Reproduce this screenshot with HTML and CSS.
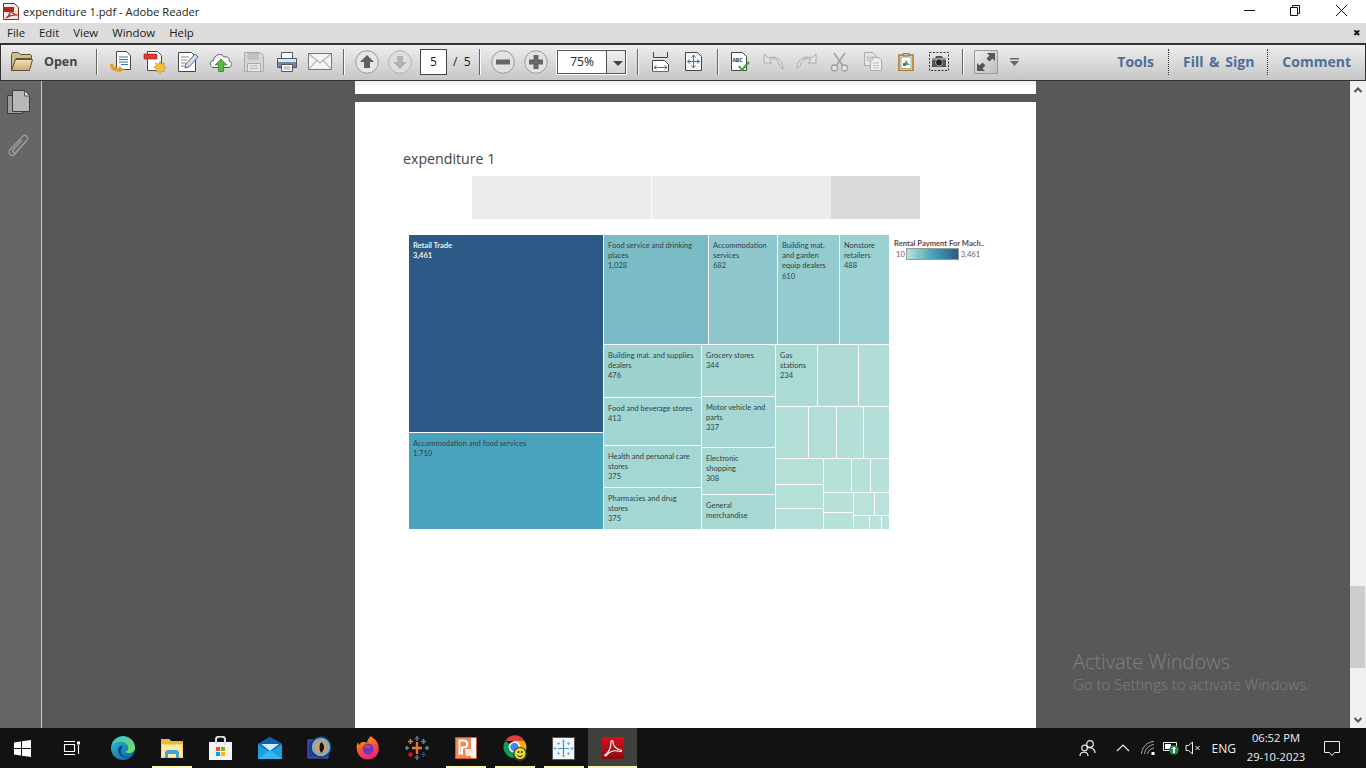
FILE: index.html
```html
<!DOCTYPE html>
<html lang="en">
<head>
<meta charset="utf-8">
<title>expenditure 1.pdf - Adobe Reader</title>
<link rel="stylesheet" href="styles.css">
</head>
<body>
<div class="app">
  <header class="titlebar">
    <svg class="app-icon" width="16" height="17" viewBox="0 0 16 17"><path d="M.5.500h11l4 4v12H.5z" fill="#f4e9e6" stroke="#7d2a22"/><path d="M0 4h11v5H0z" fill="#b3261c"/><path d="M3 15c3-2 5-6 4.500-10 0 4 3 7 7 7-4-.5-8 .5-11.500 3z" fill="none" stroke="#c0281c" stroke-width="1.300"/></svg>
    <span class="title-text">expenditure 1.pdf - Adobe Reader</span>
    <div class="winbtns">
      <svg width="46" height="23" viewBox="0 0 46 23"><path d="M18 10.500h11" stroke="#111" fill="none"/></svg>
      <svg width="46" height="23" viewBox="0 0 46 23"><path d="M18.500 7.500h7v8h-7zM20.500 7.500v-2h7v8h-2" stroke="#111" fill="none"/></svg>
      <svg width="46" height="23" viewBox="0 0 46 23"><path d="M18 5l11 11M29 5L18 16" stroke="#111" fill="none"/></svg>
    </div>
  </header>
  <nav class="menubar">
    <span>File</span><span>Edit</span><span>View</span><span>Window</span><span>Help</span>
    <span class="menu-close">✖</span>
  </nav>
  <div class="toolbar">
    <div class="open-group">
      <svg width="24" height="21" viewBox="0 0 24 21"><defs><linearGradient id="fo" x1="0" y1="0" x2="0" y2="1"><stop offset="0" stop-color="#f3e3b4"/><stop offset="1" stop-color="#c7ad6f"/></linearGradient></defs><path d="M1.500 19.500V3.500l1-2h6l2 2h10l1 1v3H6z" fill="#cfbd8b" stroke="#5c5238"/><path d="M1.500 19.500l4-11h17l-3 11z" fill="url(#fo)" stroke="#5c5238"/></svg>
      <span class="open-label">Open</span>
    </div>
    <i class="sep"></i>
    <div class="group first-group">
      <span class="btn"><svg width="23" height="23" viewBox="0 0 23 23"><path d="M6.500 1.500h10l4 4v14h-14z" fill="#fff" stroke="#444"/><path d="M9 7h9M9 9.500h9M9 12h9M11 14.500h7" stroke="#3a6fc4"/><path d="M1.500 14c0 5 5 6 9 6" fill="none" stroke="#e0a030" stroke-width="3.500"/><path d="M9 16v7l5-3.500z" fill="#e0a030"/></svg></span>
      <span class="btn"><svg width="24" height="24" viewBox="0 0 24 24"><path d="M4.500 1.500h10l4 4v15h-14z" fill="#fff" stroke="#444"/><path d="M1 4h13v5H1z" fill="#e03a30" stroke="#9c2018" stroke-width=".6"/><path d="M17 11l1.500 3 3-1-1 3 3 1.500-3 1.500 1 3-3-1-1.500 2.500-1.500-2.500-3 1 1-3-3-1.500 3-1.500-1-3 3 1z" fill="#f1bf3a" stroke="#b98a1a" stroke-width=".5"/></svg></span>
      <span class="btn"><svg width="22" height="22" viewBox="0 0 22 22"><path d="M1.500 1.500h13l4 4v15h-17z" fill="#fff" stroke="#444"/><path d="M4 6h8M4 9h6M4 12h5M4 15h4" stroke="#888"/><path d="M8 17l1-4L18 3l3 3-9 10z" fill="#cfdff0" stroke="#4a6a90"/></svg></span>
      <span class="btn"><svg width="24" height="20" viewBox="0 0 24 20"><path d="M5 15.500c-5 0-5-7-.5-7C5 3 12 0 15 5c4-1 6 2 5 4 4 1 3.500 6.500-1 6.500z" fill="#fbfbfb" stroke="#555"/><path d="M12 7l6 6h-3.500v6.500h-5V13H6z" fill="#58b947" stroke="#2e7d27" stroke-width=".7"/></svg></span>
      <span class="btn"><svg width="20" height="20" viewBox="0 0 20 20"><path d="M.5.500h16l3 3v16H.5z" fill="#d6d6d6" stroke="#aaa"/><path d="M4 1h10v6H4z" fill="#c4c4c4" stroke="#aaa" stroke-width=".7"/><path d="M3.500 11.500h13v8h-13z" fill="#e6e6e6" stroke="#aaa"/><path d="M6 14h8M6 16.500h8" stroke="#bbb"/></svg></span>
      <span class="btn"><svg width="22" height="22" viewBox="0 0 22 22"><path d="M5.500 1.500h11v6h-11z" fill="#fff" stroke="#555"/><path d="M1.500 7.500h19v9h-19z" fill="#6f8aa8" stroke="#46586e"/><path d="M2 8h18v3H2z" fill="#dfe4ea"/><path d="M5.500 13.500h11v7h-11z" fill="#fff" stroke="#555"/><path d="M7.500 16h7M7.500 18h7" stroke="#999"/></svg></span>
      <span class="btn"><svg width="24" height="17" viewBox="0 0 24 17"><path d="M.5.500h23v16H.5z" fill="#f4f4f4" stroke="#777"/><path d="M1 1l11 9 11-9M1 16l8-9M23 16l-8-9" fill="none" stroke="#999"/></svg></span>
    </div>
    <i class="sep"></i>
    <div class="group">
      <span class="btn"><svg width="24" height="24" viewBox="0 0 24 24"><circle cx="12" cy="12" r="11.300" fill="#e6e6e6" stroke="#9a9a9a"/><path d="M12 5l7 7h-4v6H9v-6H5z" fill="#5f5f5f"/></svg></span>
      <span class="btn"><svg width="24" height="24" viewBox="0 0 24 24"><circle cx="12" cy="12" r="11.300" fill="#dedede" stroke="#b4b4b4"/><path d="M12 19l-7-7h4V6h6v6h4z" fill="#b2b2b2"/></svg></span>
    </div>
    <div class="pager"><span class="page-input">5</span><span class="page-total">/ &nbsp;5</span></div>
    <i class="sep"></i>
    <div class="group">
      <span class="btn"><svg width="24" height="24" viewBox="0 0 24 24"><circle cx="12" cy="12" r="11.300" fill="#e2e2e2" stroke="#9a9a9a"/><path d="M5 9.500h14v5H5z" fill="#666"/></svg></span>
      <span class="btn"><svg width="24" height="24" viewBox="0 0 24 24"><circle cx="12" cy="12" r="11.300" fill="#e2e2e2" stroke="#9a9a9a"/><path d="M9.500 5h5v4.500H19v5h-4.500V19h-5v-4.500H5v-5h4.500z" fill="#666"/></svg></span>
    </div>
    <div class="zoom-combo"><span class="zoom-value">75%</span><span class="zoom-arrow"></span></div>
    <i class="sep"></i>
    <div class="group">
      <span class="btn"><svg width="17" height="20" viewBox="0 0 17 20"><path d="M1.500 0v5.500h14V0" fill="none" stroke="#444"/><path d="M.5 8.500h12l4 3v8" fill="#fff"/><path d="M.5 19V8.500h12l4 4V19" fill="#fff" stroke="#444"/><path d="M2 15.500h13M2 15.500l2.500-2M2 15.500l2.500 2M15 15.500l-2.500-2M15 15.500l-2.500 2M.5 19.500h16" stroke="#4a6fa8" fill="none"/></svg></span>
      <span class="btn"><svg width="17" height="19" viewBox="0 0 17 19"><path d="M.5.500h12l4 4v14H.5z" fill="#f7f7f7" stroke="#444"/><path d="M8.500 3v13M2.500 9.500h12M8.500 3L6.500 5.500M8.500 3l2 2.500M8.500 16l-2-2.500M8.500 16l2-2.500M2.500 9.500L5 7.500M2.500 9.500L5 11.500M14.500 9.500L12 7.500M14.500 9.500L12 11.500" fill="none" stroke="#4a6fa8"/></svg></span>
    </div>
    <i class="sep"></i>
    <div class="group">
      <span class="btn"><svg width="19" height="19" viewBox="0 0 19 19"><path d="M.5.500h11l4 4v14H.5z" fill="#fff" stroke="#444"/><text class="abc" x="1.500" y="10">ABC</text><path d="M8 14l3 4 7-8" fill="none" stroke="#3f9a3a" stroke-width="2"/></svg></span>
      <span class="btn"><svg width="21" height="17" viewBox="0 0 21 17"><path d="M1 1v9h8L6 7c5-3 9-1 11 6l3 3c0-9-7-14-15-11L1 1z" fill="#e6e6e6" stroke="#aaa"/></svg></span>
      <span class="btn"><svg width="21" height="17" viewBox="0 0 21 17"><path d="M20 1v9h-8l3-3c-5-3-9-1-11 6l-3 3C1 7 8 2 16 5l4-4z" fill="#e6e6e6" stroke="#aaa"/></svg></span>
      <span class="btn"><svg width="19" height="20" viewBox="0 0 19 20"><path d="M4 1l9 13M15 1L6 14" stroke="#a2a2a2" stroke-width="1.500" fill="none"/><circle cx="4.500" cy="16" r="3" fill="#e6e6e6" stroke="#a2a2a2" stroke-width="1.400"/><circle cx="14.500" cy="16" r="3" fill="#e6e6e6" stroke="#a2a2a2" stroke-width="1.400"/></svg></span>
      <span class="btn"><svg width="18" height="19" viewBox="0 0 18 19"><path d="M.5.500h8l3 3v10H.5z" fill="#e6e6e6" stroke="#aaa"/><path d="M6.500 5.500h8l3 3v10h-11z" fill="#efefef" stroke="#aaa"/><path d="M9 11h6M9 13.500h6M9 16h6" stroke="#bbb"/><path d="M3 4l3 2 3-2v4l-3 2-3-2z" fill="#cfcfcf" stroke="#aaa" stroke-width=".5"/></svg></span>
      <span class="btn"><svg width="16" height="19" viewBox="0 0 16 19"><path d="M1 3h14v15.500H1z" fill="#f5e8c0" stroke="#a87a28" stroke-width="1.500"/><path d="M3 5h10v11.500H3z" fill="#fff" stroke="#555" stroke-width=".5"/><path d="M5 1.500h6V4H5z" fill="#bbb" stroke="#555" stroke-width=".6"/><path d="M6 13l2-5 2 3 2 2z" fill="#5aa84f"/><path d="M5 11h3v3H5z" fill="#3a6fc4"/></svg></span>
      <span class="btn"><svg width="20" height="19" viewBox="0 0 20 19"><path d="M.5.500h19v18H.5z" fill="none" stroke="#333" stroke-dasharray="2 1.500"/><path d="M3 6h3l1-2h6l1 2h3v9H3z" fill="#555"/><path d="M3 6h14v2H3z" fill="#999"/><circle cx="10" cy="10.500" r="3.500" fill="#222" stroke="#bbb" stroke-width=".8"/></svg></span>
    </div>
    <i class="sep"></i>
    <div class="group">
      <span class="btn"><svg width="24" height="24" viewBox="0 0 24 24"><defs><linearGradient id="ex" x1="0" y1="0" x2="1" y2="1"><stop offset="0" stop-color="#f0f0f0"/><stop offset="1" stop-color="#bcbcbc"/></linearGradient></defs><path d="M.5.500h23v23H.5z" fill="url(#ex)" stroke="#9a9a9a"/><path d="M13 3h8v8l-2.500-2.500-3 3-3-3 3-3zM11 21H3v-8l2.500 2.500 3-3 3 3-3 3z" fill="#555"/></svg></span>
      <span class="more"><svg width="9" height="8" viewBox="0 0 9 8"><path d="M0 0h9v1.500H0zM0 3h9L4.500 8z" fill="#666"/></svg></span>
    </div>
    <div class="panes">
      <span class="pane pane-wide">Tools</span>
      <span class="pane pane-dotted">Fill &amp; Sign</span>
      <span class="pane pane-dotted pane-wide">Comment</span>
    </div>
  </div>
  <div class="workspace">
    <aside class="navpane">
      <svg width="24" height="24" viewBox="0 0 24 24"><path d="M.5 5.500h15v18H.5z" fill="#9c9c9c" stroke="#3c3c3c"/><path d="M5.500.500h12l5 5v16h-17z" fill="#b8b8b8" stroke="#3c3c3c"/><path d="M17.500 1v5h5" fill="#ddd" stroke="#555"/></svg>
      <svg width="22" height="25" viewBox="0 0 22 25"><path d="M19 6L7 20c-3 4-8-1-5-4L15 2c2-2 6 1 4 4L8 18c-1 2-4 0-3-2l9-10" fill="none" stroke="#9a9a9a" stroke-width="1.500"/></svg>
    </aside>
    <main class="docarea">
      <div class="sliver"></div>
      <article class="page">
        <h1 class="sheet-title">expenditure 1</h1>
        <div class="filters"><div class="filter"></div><div class="filter"></div><div class="filter filter-dark"></div></div>
        <div class="viz">
          <div class="tm-row treemap">
            <div class="tm-col" style="flex:0 0 194px">
              <div class="cell cell-dark" style="flex:0 0 197px;background:#2c5985"><b>Retail Trade</b><b>3,461</b></div>
              <div class="cell" style="flex:1 1 96px;background:#49a3bc"><span>Accommodation and food services</span><span>1,710</span></div>
            </div>
            <div class="tm-col" style="flex:0 0 285px">
              <div class="tm-row" style="flex:0 0 109px">
                <div class="cell" style="flex:0 0 104px;background:#79bcc6"><span>Food service and drinking places</span><span>1,028</span></div>
                <div class="cell" style="flex:0 0 68px;background:#8ec8ce"><span>Accommodation services</span><span>682</span></div>
                <div class="cell" style="flex:0 0 61px;background:#93cbcf"><span>Building mat. and garden equip dealers</span><span>610</span></div>
                <div class="cell" style="flex:1 1 49px;background:#9bd1d0"><span>Nonstore retailers</span><span>488</span></div>
              </div>
              <div class="tm-row" style="flex:1 1 184px">
                <div class="tm-col" style="flex:0 0 97px">
                  <div class="cell" style="flex:0 0 52px;background:#9dd2d0"><span>Building mat. and supplies dealers</span><span>476</span></div>
                  <div class="cell" style="flex:0 0 47px;background:#a1d4d2"><span>Food and beverage stores</span><span>413</span></div>
                  <div class="cell" style="flex:0 0 41px;background:#a4d6d3"><span>Health and personal care stores</span><span>375</span></div>
                  <div class="cell" style="flex:1 1 41px;background:#a4d6d3"><span>Pharmacies and drug stores</span><span>375</span></div>
                </div>
                <div class="tm-col" style="flex:0 0 73px">
                  <div class="cell" style="flex:0 0 51px;background:#a6d7d3"><span>Grocery stores</span><span>344</span></div>
                  <div class="cell" style="flex:0 0 50px;background:#a7d7d4"><span>Motor vehicle and parts</span><span>337</span></div>
                  <div class="cell" style="flex:0 0 46px;background:#a8d8d4"><span>Electronic shopping</span><span>308</span></div>
                  <div class="cell" style="flex:1 1 34px;background:#a9d8d4"><span>General merchandise</span></div>
                </div>
                <div class="tm-col" style="flex:1 1 113px">
                  <div class="tm-row" style="flex:0 0 61px">
                    <div class="cell" style="flex:0 0 41px;background:#acdbd5"><span>Gas stations</span><span>234</span></div>
                    <div class="cell" style="flex:0 0 40px;background:#aedbd5"></div>
                    <div class="cell" style="flex:1 1 30px;background:#b0ddd6"></div>
                  </div>
                  <div class="tm-row" style="flex:0 0 51px">
                    <div class="cell" style="flex:0 0 32px;background:#b1ded7"></div>
                    <div class="cell" style="flex:0 0 27px;background:#b2ded7"></div>
                    <div class="cell" style="flex:0 0 26px;background:#b3dfd8"></div>
                    <div class="cell" style="flex:1 1 25px;background:#b4dfd8"></div>
                  </div>
                  <div class="tm-row" style="flex:1 1 70px">
                    <div class="tm-col" style="flex:0 0 47px">
                      <div class="cell" style="flex:0 0 25px;background:#b4e0d8"></div>
                      <div class="cell" style="flex:0 0 23px;background:#b5e0d8"></div>
                      <div class="cell" style="flex:1 1 20px;background:#b5e0d9"></div>
                    </div>
                    <div class="tm-col" style="flex:1 1 65px">
                      <div class="tm-row" style="flex:0 0 33px">
                        <div class="cell" style="flex:0 0 27px;background:#b6e1d9"></div>
                        <div class="cell" style="flex:0 0 18px;background:#b6e1d9"></div>
                        <div class="cell" style="flex:1 1 18px;background:#b7e1d9"></div>
                      </div>
                      <div class="tm-row" style="flex:1 1 36px">
                        <div class="tm-col" style="flex:0 0 29px">
                          <div class="cell" style="flex:0 0 19px;background:#b7e1d9"></div>
                          <div class="cell" style="flex:1 1 16px;background:#b7e2da"></div>
                        </div>
                        <div class="tm-col" style="flex:1 1 35px">
                          <div class="tm-row" style="flex:0 0 22px">
                            <div class="cell" style="flex:0 0 20px;background:#b8e2da"></div>
                            <div class="cell" style="flex:1 1 14px;background:#b8e2da"></div>
                          </div>
                          <div class="tm-row" style="flex:1 1 13px">
                            <div class="cell" style="flex:0 0 15px;background:#b8e2da"></div>
                            <div class="cell" style="flex:0 0 11px;background:#b9e3da"></div>
                            <div class="cell" style="flex:1 1 7px;background:#b9e3da"></div>
                          </div>
                        </div>
                      </div>
                    </div>
                  </div>
                </div>
              </div>
            </div>
          </div>
          <div class="legend">
            <div class="legend-title">Rental Payment For Mach..</div>
            <div class="legend-scale"><span>10</span><i class="legend-bar"></i><span>3,461</span></div>
          </div>
        </div>
      </article>
      <div class="activate">
        <div class="activate-big">Activate Windows</div>
        <div class="activate-small">Go to Settings to activate Windows.</div>
      </div>
    </main>
    <div class="scrollbar">
      <svg class="sb-up" width="16" height="18" viewBox="0 0 16 18"><path d="M4.500 11l3.500-3.500 3.500 3.500" fill="none" stroke="#555" stroke-width="2"/></svg>
      <div class="sb-thumb"></div>
      <svg class="sb-down" width="16" height="14" viewBox="0 0 16 14"><path d="M4.500 4l3.500 3.500L11.500 4" fill="none" stroke="#555" stroke-width="2"/></svg>
    </div>
  </div>
  <footer class="taskbar">
    <span class="tb-start"><svg width="17" height="17" viewBox="0 0 17 17"><path d="M0 2.500l7-1V8H0zM8 1.300L17 0v8H8zM0 9h7v6.500l-7-1zM8 9h9v8l-9-1.300z" fill="#fff"/></svg></span>
    <span class="tb-view"><svg width="17" height="17" viewBox="0 0 17 17"><path d="M1.500 4.500h10v7h-10zM1 1.500h11M1 14.500h11M15.500 5v9" stroke="#fff" fill="none" stroke-width="1.100"/><path d="M14 1.500h3v3h-3z" fill="#fff"/></svg></span>
    <span class="tb-item"><svg width="24" height="24" viewBox="0 0 24 24"><defs><linearGradient id="ed1" x1="0" y1="0" x2="1" y2="1"><stop offset="0" stop-color="#2ec2d0"/><stop offset="1" stop-color="#0c59a4"/></linearGradient><linearGradient id="ed2" x1="0" y1="0" x2="1" y2="1"><stop offset="0" stop-color="#38c3c9"/><stop offset="1" stop-color="#7ce05c"/></linearGradient></defs><circle cx="12" cy="12" r="12" fill="url(#ed1)"/><path d="M1 9C3 2 10 0 14 .5c6 1 10 6 10 11.500 0 3-3 5-6 5-2.500 0-4-1-4-1.500 2 0 4-2 3-5C16 6 8 3 1 9z" fill="url(#ed2)"/><path d="M11 9.500C7 10 6 15 8.500 18.500c2 2.500 6 3.500 9 2.500-5 .5-9-3-7.500-7 .5-2 2-3.500 1-4.500z" fill="#0a3f7e"/></svg></span>
    <span class="tb-item tb-open"><svg width="22" height="21" viewBox="0 0 22 21"><path d="M0 1h8l2 2h12v17H0z" fill="#f4d36c"/><path d="M0 1h8l2 2h12v3H0z" fill="#e7b93f"/><path d="M1 7h20v12H1z" fill="#ffe9a4"/><path d="M4 20v-6l2-2h10l2 2v6h-3v-4H7v4z" fill="#3fa4dc"/></svg></span>
    <span class="tb-item"><svg width="23" height="24" viewBox="0 0 23 24"><path d="M0 6h23v18H0z" fill="#f4f4f4"/><path d="M7 9V3c0-3.500 9-3.500 9 0v6" fill="none" stroke="#ddd" stroke-width="2"/><path d="M7 11h4v4H7z" fill="#f25022"/><path d="M12 11h4v4h-4z" fill="#7fba00"/><path d="M7 16h4v4H7z" fill="#00a4ef"/><path d="M12 16h4v4h-4z" fill="#ffb900"/></svg></span>
    <span class="tb-item"><svg width="24" height="22" viewBox="0 0 24 22"><path d="M0 7l12-7 12 7v15H0z" fill="#1aa0e0"/><path d="M0 7l12-7 12 7-12 8z" fill="#0c62b0"/><path d="M3 7h18l-9 7z" fill="#cfeafa"/><path d="M0 22l12-9 12 9z" fill="#38b6ef"/></svg></span>
    <span class="tb-item"><svg width="24" height="24" viewBox="0 0 24 24"><path d="M1 4h20v18H1z" fill="#2a3a9c" stroke="#5060d0"/><circle cx="14" cy="11" r="10" fill="#8aa8b8" stroke="#16406a" stroke-width="1.500"/><circle cx="14" cy="11" r="6" fill="#caa070"/><path d="M14 6c4 2 4 8 0 11-2-3-2-8 0-11z" fill="#111"/></svg></span>
    <span class="tb-item"><svg width="24" height="24" viewBox="0 0 24 24"><defs><linearGradient id="ff" x1="0" y1="0" x2=".4" y2="1"><stop offset="0" stop-color="#ffb21e"/><stop offset=".55" stop-color="#fb5a2a"/><stop offset="1" stop-color="#f0257a"/></linearGradient></defs><path d="M15 0c2 3 4 2 6 6 3 5 2 12-2 15-5 4-13 3-16-2C0 15 0 10 2 6l1 3c1-2 3-3 4-3 2 0 3 0 4 1 0-3 2-5 4-7z" fill="url(#ff)"/><circle cx="12" cy="13" r="5.500" fill="#6a38c8"/><path d="M7 11c3-3 8-2 8 1h-5z" fill="#e8402c"/></svg></span>
    <span class="tb-item"><svg width="24" height="24" viewBox="0 0 24 24" fill="none" stroke-width="1.700"><path d="M12 6v12M7 12h10" stroke="#e8762b" stroke-width="2.300"/><path d="M12 0v5M9.700 2.500h4.600M12 19v5M9.700 21.500h4.600" stroke="#5b6c8a"/><path d="M5.500 3v5M3 5.500h5" stroke="#e8762b"/><path d="M18.500 3v5M16 5.500h5" stroke="#5b879c"/><path d="M5.500 16v5M3 18.500h5" stroke="#c72037"/><path d="M18.500 16v5M16 18.500h5" stroke="#1f447a"/><path d="M2 10v4M0 12h4M22 10v4M20 12h4" stroke="#5b879c"/></svg></span>
    <span class="tb-item tb-open"><svg width="22" height="22" viewBox="0 0 22 22"><path d="M.5.500h21v21H.5z" fill="#fff" stroke="#d2522a"/><path d="M1 1h15v20H1z" fill="#ef8a5c"/><path d="M4.500 3.500h4c5 0 5 7 0 7H7v6H4.500z" fill="none" stroke="#fff" stroke-width="2"/><path d="M10 12h10l-2 7h-7z" fill="#fde8de"/></svg></span>
    <span class="tb-item tb-open"><svg width="26" height="26" viewBox="0 0 26 26"><path d="M3.300 6A11 11 0 0 1 22.500 6H12z" fill="#db4437"/><path d="M3.300 6A11 11 0 0 0 12 23l5-8z" fill="#0f9d58"/><path d="M22.500 6A11 11 0 0 1 12 23l5-8-5-9z" fill="#f4b400"/><circle cx="12.500" cy="12" r="5" fill="#4285f4" stroke="#fff" stroke-width="1.600"/><circle cx="18" cy="19" r="7" fill="#3a3a36"/><circle cx="18" cy="18.500" r="5.500" fill="#eadb2a"/><circle cx="16.500" cy="17" r=".9" fill="#222"/><circle cx="19.800" cy="17" r=".9" fill="#222"/><path d="M15.500 20.500c1.500 1.500 3.500 1.500 5 0" stroke="#222" fill="none"/></svg></span>
    <span class="tb-item tb-open"><svg width="23" height="23" viewBox="0 0 23 23"><path d="M.5.500h22v22H.5z" fill="#f4f7fa" stroke="#555"/><g fill="none" stroke="#7cb0d8" stroke-width="1.200"><path d="M11.500 5v13M6 11.500h11" stroke="#4a8cc4"/><path d="M11.500 2.500v3M10 4h3M11.500 17.500v3M10 19h3M6.500 5v3M5 6.500h3M16.500 5v3M15 6.500h3M6.500 15v3M5 16.500h3M16.500 15v3M15 16.500h3M3 10v3M1.500 11.500h3M20 10v3M18.500 11.500h3"/></g></svg></span>
    <span class="tb-item tb-open tb-active"><svg width="22" height="22" viewBox="0 0 22 22"><defs><linearGradient id="ac" x1="0" y1="0" x2="0" y2="1"><stop offset="0" stop-color="#d8101a"/><stop offset="1" stop-color="#8a0a10"/></linearGradient></defs><path d="M0 0h22v22H0z" fill="url(#ac)"/><path d="M3 18c3-2 6-7 6-13 0-2 2-2 2 0 0 4 4 8 8 8 1 0 1 2-1 1.500C13 13 8 14 5 18c-1 1.500-3 1-2 0z" fill="none" stroke="#fff" stroke-width="1.200"/></svg></span>
    <div class="tray">
      <svg class="tray-people" width="18" height="18" viewBox="0 0 18 18"><circle cx="11" cy="5" r="3.300" fill="none" stroke="#eee" stroke-width="1.200"/><circle cx="5.500" cy="9" r="2.800" fill="none" stroke="#eee" stroke-width="1.200"/><path d="M1 17c0-5 8-5 8 0M8 9c3-1 8 0 8 5" fill="none" stroke="#eee" stroke-width="1.200"/></svg>
      <svg class="tray-chev" width="14" height="8" viewBox="0 0 14 8"><path d="M1 7l6-6 6 6" fill="none" stroke="#eee" stroke-width="1.200"/></svg>
      <svg class="tray-wifi" width="14" height="14" viewBox="0 0 14 14"><path d="M.5 13C1 6 6 1 13 .5M3.500 13C4 8 8 4 13 3.500M6.500 13c.5-3 3-5.500 6.500-6" fill="none" stroke="#aaa"/><path d="M10.500 11h3v3h-3z" fill="#fff"/></svg>
      <svg class="tray-batt" width="16" height="14" viewBox="0 0 16 14"><path d="M.5 1.500h13v8H.5z" fill="#111" stroke="#eee"/><path d="M2 3h6v5H2z" fill="#fff"/><circle cx="11" cy="9" r="4.800" fill="#1a8a3c"/><path d="M11 5.500l2.500 2.500h-1.500v4h-2V8H8.500z" fill="#fff"/></svg>
      <svg class="tray-vol" width="16" height="14" viewBox="0 0 16 14"><path d="M1 4.500h2.500L7.500 1v12L3.500 9.500H1z" fill="none" stroke="#eee"/><path d="M10.500 5l4 4M14.500 5l-4 4" stroke="#eee"/></svg>
      <span class="tray-lang">ENG</span>
      <div class="clock"><span>06:52 PM</span><span>29-10-2023</span></div>
      <svg class="tray-note" width="16" height="15" viewBox="0 0 16 15"><path d="M.5.500h15v11h-5l-2.500 3-2.500-3h-5z" fill="none" stroke="#eee"/></svg>
    </div>
  </footer>
</div>
</body>
</html>
```
FILE: styles.css
```css
* { box-sizing: border-box; }
html, body { margin: 0; padding: 0; }
body { width: 1366px; height: 768px; overflow: hidden; font-family: "Open Sans", "Liberation Sans", sans-serif; background: #fff; }
svg { display: block; flex: none; }
.app { display: flex; flex-direction: column; width: 1366px; height: 768px; position: relative; }

.titlebar { height: 23px; flex: none; display: flex; align-items: center; background: #fff; padding-left: 3px; }
.app-icon { margin-right: 4px; }
.title-text { font-size: 11.2px; color: #222; }
.winbtns { margin-left: auto; display: flex; margin-right: 2px; }

.menubar { height: 20px; flex: none; display: flex; align-items: center; background: #dcdcdc; font-size: 11.4px; color: #222; padding-left: 7px; gap: 14px; padding-bottom: 1px; }
.menu-close { margin-left: auto; margin-right: 5px; font-size: 9px; color: #111; }

.toolbar { height: 38px; flex: none; display: flex; align-items: center; border: 1px solid #333; border-width: 2px 1px 1px; padding-bottom: 2px; background: linear-gradient(#eeeeee, #c6c6c6); }
.open-group { width: 95px; display: flex; align-items: center; padding-left: 9px; }
.open-label { margin-left: 10px; font-size: 12.5px; font-weight: 700; color: #444; }
.sep { flex: none; display: block; width: 2px; height: 26px; background: linear-gradient(90deg, #666 50%, #fafafa 50%); margin: 0 5px 0 7px; }
.open-group + .sep { margin-left: 0; }
.group { display: flex; align-items: center; }
.first-group { margin-left: 2px; }
.btn { width: 33px; height: 34px; display: flex; align-items: center; justify-content: center; flex: none; }
.pager { width: 63px; margin-right: -7px; display: flex; align-items: center; padding-left: 4px; flex: none; font-size: 12px; color: #222; }
.page-input { width: 27px; height: 26px; background: #fff; border: 1px solid #444; display: flex; align-items: center; justify-content: center; }
.page-total { margin-left: 6px; }
.zoom-combo { margin-left: 4px; width: 71px; height: 26px; border: 1px solid #fff; outline: 1px solid #555; outline-offset: -2px; display: flex; flex: none; background: #fff; margin-right: 3px; }
.zoom-value { width: 48px; display: flex; align-items: center; justify-content: center; font-size: 12px; color: #222; padding-left: 2px; }
.zoom-arrow { flex: 1; margin: 1px; background: linear-gradient(#f2f2f2, #d4d4d4) ; border-left: 1px solid #555; position: relative; }
.zoom-arrow::after { content: ""; position: absolute; left: 6px; top: 10px; border: 5px solid transparent; border-top-color: #444; border-bottom: 0; }
.abc { font-family: "Liberation Mono", monospace; font-size: 5.6px; fill: #333; font-weight: 700; }
.more { width: 25px; display: flex; justify-content: center; }
.panes { margin-left: auto; display: flex; align-items: center; height: 26px; font-size: 14px; font-weight: 700; color: #4e6f97; }
.pane { padding: 0 13px 0 14px; height: 26px; display: flex; align-items: center; white-space: nowrap; }
.pane-wide { padding-right: 14px; }
.pane-dotted { border-left: 1px dotted #333; word-spacing: 2px; }

.workspace { flex: 1; display: flex; min-height: 0; background: #585858; }
.navpane { width: 42px; flex: none; background: #666; border-right: 1px solid #c8c8c8; display: flex; flex-direction: column; align-items: center; padding-top: 9px; gap: 20px; padding-right: 3px; }
.docarea { flex: 1; display: flex; flex-direction: column; padding-left: 313px; overflow: hidden; }
.sliver { width: 681px; height: 13px; flex: none; background: #fff; border-top: 4px solid #f2f2f2; }
.page { width: 681px; flex: 1; margin-top: 8px; background: #fff; padding-top: 47px; }
.sheet-title { margin: 0 0 0 48px; font-size: 14.2px; line-height: 20px; font-weight: 400; color: #444; }
.filters { display: flex; margin: 7px 0 0 117px; gap: 1px; height: 43px; }
.filter { width: 179px; background: #ececec; }
.filter-dark { width: 89px; margin-left: -1px; background: #d9d9d9; }
.viz { display: flex; margin: 16px 0 0 54px; align-items: flex-start; }
.treemap { flex: none; width: 480px; height: 294px; }
.tm-row { display: flex; gap: 1px; min-height: 0; min-width: 0; }
.tm-col { display: flex; flex-direction: column; gap: 1px; min-height: 0; min-width: 0; }
.cell { display: flex; flex-direction: column; padding: 5.6px 6px 0 4px; font-family: Lato, "Open Sans", sans-serif; font-size: 7.5px; line-height: 10.4px; color: #2f4347; overflow: hidden; min-height: 0; min-width: 0; }
.cell:empty { padding: 0; }
.cell span, .cell b { display: block; }
.cell-dark { color: #eef2f6; }
.cell-dark b { font-weight: 700; }
.legend { margin-left: 5px; width: 96px; font-family: Lato, "Open Sans", sans-serif; font-size: 7.6px; line-height: 10px; }
.legend-title { font-weight: 700; color: #57454f; white-space: nowrap; margin-top: 3px; }
.legend-scale { display: flex; align-items: center; padding-left: 2px; color: #666; gap: 2px; }
.legend-bar { width: 53px; height: 12px; margin-left: -1px; border: 1px solid #9a9a8e; background: linear-gradient(90deg, #b7e1da, #49a3bc 50%, #2c5985); }

.activate { position: absolute; left: 1073px; top: 649px; color: #808080; white-space: nowrap; }
.activate-big { font-size: 20px; line-height: 26px; font-weight: 300; }
.activate-small { font-size: 15px; line-height: 19px; font-weight: 300; }

.scrollbar { width: 16px; flex: none; background: #f0f0f0; display: flex; flex-direction: column; }
.sb-thumb { width: 15px; height: 82px; margin-top: 487px; background: #cdcdcd; flex: none; }
.sb-down { margin-top: auto; }

.taskbar { height: 40px; flex: none; display: flex; align-items: center; background: #121212; }
.tb-start { width: 44px; height: 40px; display: flex; align-items: center; justify-content: center; }
.tb-view { width: 54px; height: 40px; display: flex; align-items: center; justify-content: center; }
.tb-item { width: 49px; height: 40px; display: flex; align-items: center; justify-content: center; flex: none; position: relative; }
.tb-open::after { content: ""; position: absolute; left: 5px; right: 4px; bottom: 0; height: 2px; background: #f7f7b5; }
.tb-active { background: #3f3f3b; }
.tb-active::after { left: 0; right: 0; }
.tray { margin-left: auto; display: flex; align-items: center; color: #eee; height: 40px; }
.tray-people { margin-right: 19px; }
.tray-chev { margin-right: 11px; }
.tray-wifi { margin-right: 8px; }
.tray-batt { margin-right: 6px; }
.tray-vol { margin-right: 11px; }
.tray-lang { font-size: 12px; margin-right: 9px; }
.clock { width: 62px; display: flex; flex-direction: column; align-items: center; font-size: 11.2px; line-height: 19px; padding-bottom: 2px; }
.tray-note { margin: 0 26px 0 17px; }
```
